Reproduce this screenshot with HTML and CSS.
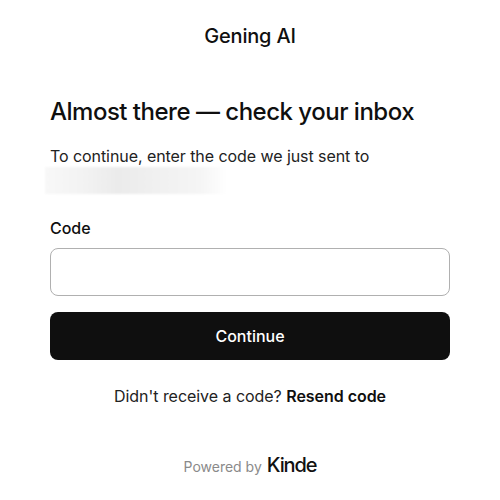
FILE: index.html
```html
<!DOCTYPE html>
<html lang="en">
<head>
<meta charset="utf-8">
<title>Gening AI</title>
<link rel="stylesheet" href="styles.css">
</head>
<body>
<main class="page">
  <header class="brand">Gening AI</header>
  <h1 class="title">Almost there — check your inbox</h1>
  <p class="lead">To continue, enter the code we just sent to</p>
  <div class="email" aria-hidden="true"></div>
  <label class="label" for="code">Code</label>
  <input class="field" id="code" type="text">
  <button class="submit" type="button">Continue</button>
  <p class="resend">Didn't receive a code? <strong>Resend code</strong></p>
  <footer class="powered"><span class="powered-text">Powered by</span><span class="kinde">Kinde</span></footer>
</main>
</body>
</html>
```
FILE: styles.css
```css
* { box-sizing: border-box; }
html, body { margin: 0; padding: 0; background: #fff; }
body { font-family: Inter, "Liberation Sans", sans-serif; color: #0f0f0f; }
.page { width: 500px; height: 500px; padding: 24px 50px 0; display: flex; flex-direction: column; overflow: hidden; }
.brand { text-align: center; font-size: 20px; line-height: 24px; font-weight: 500; letter-spacing: -0.2px; }
.title { margin: 49px 0 0; font-size: 24px; line-height: 30px; font-weight: 500; letter-spacing: -0.5px; }
.lead { margin: 19px 0 0; font-size: 16px; line-height: 20px; letter-spacing: -0.07px; color: #222; }
.email { margin: 1px 0 0 -5px; width: 182px; height: 27px; background: linear-gradient(90deg, #f8f8f8, #f3f3f3 20%, #ebebeb 40%, #f1f1f1 65%, #f5f5f5 85%, #fff); filter: blur(1px); }
.label { margin-top: 24px; font-size: 16px; line-height: 20px; font-weight: 500; letter-spacing: -0.05px; }
.field { margin-top: 10px; width: 100%; height: 48px; border: 1px solid #b0b0b0; border-radius: 8px; background: #fff; }
.submit { margin-top: 16px; width: 100%; height: 48px; border: 0; border-radius: 8px; background: #0f0f0f; color: #fff; font: 500 16px Inter, "Liberation Sans", sans-serif; }
.resend { margin: 26px 0 0; text-align: center; font-size: 16px; line-height: 20px; color: #222; letter-spacing: -0.04px; }
.resend strong { font-weight: 600; color: #0f0f0f; }
.powered { margin-top: 49px; display: flex; justify-content: center; align-items: center; gap: 5px; }
.powered-text { font-size: 14px; color: #8a8a8a; }
.kinde { font-size: 20px; line-height: 20px; font-weight: 500; letter-spacing: -1.1px; color: #111; margin-bottom: 3px; }
```
